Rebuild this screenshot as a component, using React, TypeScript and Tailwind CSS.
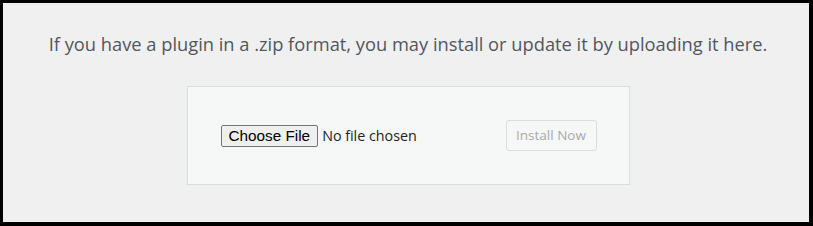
import React from "react";

export default function App() {
  return (
    <div className="w-[813px] h-[226px] bg-black p-[3px] pr-[4px] pb-[4px]">
      <div className="h-full bg-[#f0f0f1] flex flex-col items-center pt-[28px] pl-[4px]">
        <p className="text-[18.3px] leading-[26px] text-[#50575e] font-['Open_Sans',sans-serif]">
          If you have a plugin in a .zip format, you may install or update it by uploading it here.
        </p>
        <form
          onSubmit={(e) => e.preventDefault()}
          className="mt-[29px] w-[443px] h-[99px] bg-[#f6f7f7] border border-[#dcdcde] flex items-center justify-between pl-[33px] pr-[32px]"
        >
          <div className="flex items-center gap-[4px] font-['Liberation_Sans',Arial,sans-serif]">
            <button
              type="button"
              className="h-[22px] px-[7px] text-[15.3px] leading-none text-black bg-[#efefef] border border-[#767676] rounded-[2px]"
            >
              Choose File
            </button>
            <span className="text-[14.3px] text-[#1d2327] font-['Open_Sans',sans-serif]">No file chosen</span>
          </div>
          <button
            type="submit"
            disabled
            className="h-[31px] w-[91px] text-[13.5px] text-[#a7aaad] bg-[#f6f7f7] border border-[#dcdcde] rounded-[3px] font-['Open_Sans',sans-serif]"
          >
            Install Now
          </button>
        </form>
      </div>
    </div>
  );
}
